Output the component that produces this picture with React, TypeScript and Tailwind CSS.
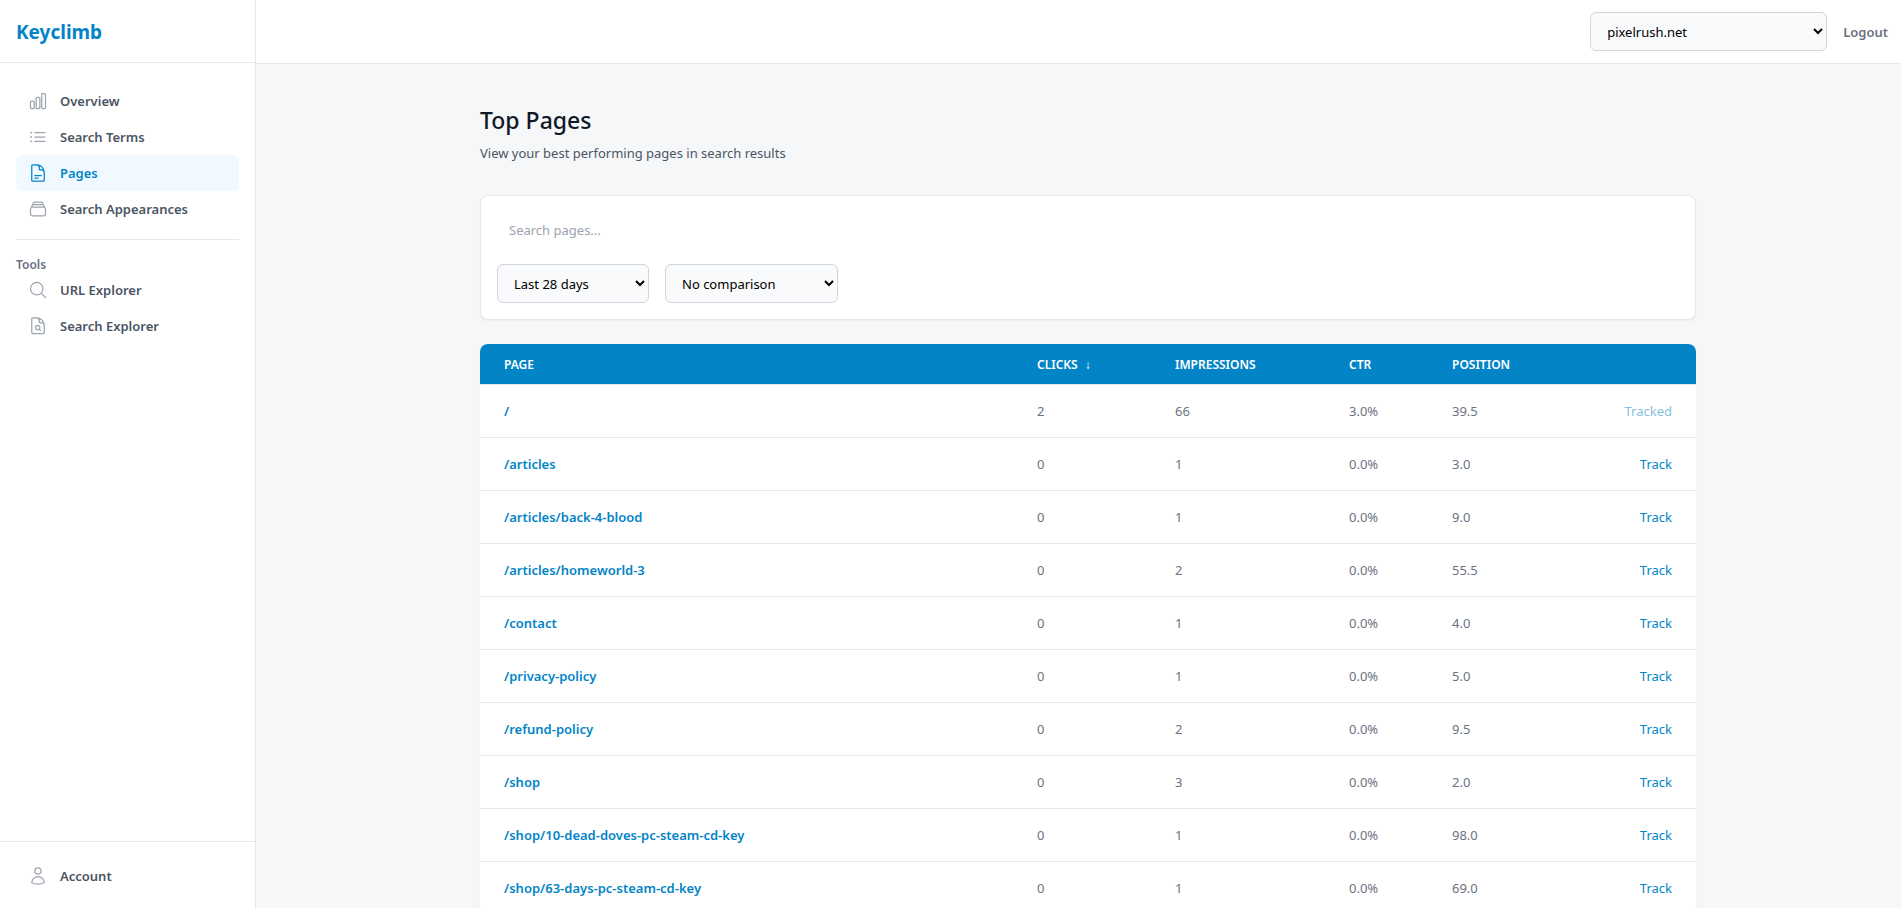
import type { ComponentType } from "react";
import clsx from "clsx";
import {
  HiOutlineChartBar,
  HiOutlineDocumentMagnifyingGlass,
  HiOutlineDocumentText,
  HiOutlineListBullet,
  HiOutlineMagnifyingGlass,
  HiOutlineRectangleStack,
  HiOutlineUser,
} from "react-icons/hi2";

type NavItemProps = {
  label: string;
  icon: ComponentType<{ className?: string }>;
  active?: boolean;
};

const mainNav: NavItemProps[] = [
  { label: "Overview", icon: HiOutlineChartBar },
  { label: "Search Terms", icon: HiOutlineListBullet },
  { label: "Pages", icon: HiOutlineDocumentText, active: true },
  { label: "Search Appearances", icon: HiOutlineRectangleStack },
];

const toolsNav: NavItemProps[] = [
  { label: "URL Explorer", icon: HiOutlineMagnifyingGlass },
  { label: "Search Explorer", icon: HiOutlineDocumentMagnifyingGlass },
];

const rows = [
  { page: "/", clicks: 2, impressions: 66, ctr: "3.0%", position: "39.5", tracked: true },
  { page: "/articles", clicks: 0, impressions: 1, ctr: "0.0%", position: "3.0" },
  { page: "/articles/back-4-blood", clicks: 0, impressions: 1, ctr: "0.0%", position: "9.0" },
  { page: "/articles/homeworld-3", clicks: 0, impressions: 2, ctr: "0.0%", position: "55.5" },
  { page: "/contact", clicks: 0, impressions: 1, ctr: "0.0%", position: "4.0" },
  { page: "/privacy-policy", clicks: 0, impressions: 1, ctr: "0.0%", position: "5.0" },
  { page: "/refund-policy", clicks: 0, impressions: 2, ctr: "0.0%", position: "9.5" },
  { page: "/shop", clicks: 0, impressions: 3, ctr: "0.0%", position: "2.0" },
  { page: "/shop/10-dead-doves-pc-steam-cd-key", clicks: 0, impressions: 1, ctr: "0.0%", position: "98.0" },
  { page: "/shop/63-days-pc-steam-cd-key", clicks: 0, impressions: 1, ctr: "0.0%", position: "69.0" },
];

const selectClass = "h-[39px] rounded-md border border-[#d1d5db] bg-[#f9fafb] px-3 text-black";

function NavItem({ label, icon: Icon, active }: NavItemProps) {
  return (
    <a
      href="#"
      className={clsx(
        "flex h-9 items-center gap-3 rounded-md px-3 font-semibold",
        active ? "bg-[#f0f9ff] text-[#0284c7]" : "text-[#4b5563]",
      )}
    >
      <Icon className={clsx("size-5", active ? "text-[#0284c7]" : "text-[#9ca3af]")} />
      {label}
    </a>
  );
}

function Sidebar() {
  return (
    <aside className="sticky top-0 flex h-screen w-64 shrink-0 flex-col border-r border-[#e5e7eb] bg-white">
      <div className="flex h-[63px] items-center border-b border-[#e5e7eb] px-4 pt-0.5">
        <a href="#" className="text-[19px] font-bold text-[#0284c7]">
          Keyclimb
        </a>
      </div>

      <nav className="flex-1 px-4 pt-5">
        {mainNav.map((item) => (
          <NavItem key={item.label} {...item} />
        ))}
        <hr className="mt-3 border-[#e5e7eb]" />
        <h2 className="mt-[18px] text-xs leading-[14px] font-semibold text-[#6b7280]">Tools</h2>
        {toolsNav.map((item) => (
          <NavItem key={item.label} {...item} />
        ))}
      </nav>

      <div className="border-t border-[#e5e7eb] px-4 pt-4 pb-3.5">
        <NavItem label="Account" icon={HiOutlineUser} />
      </div>
    </aside>
  );
}

function Filters() {
  return (
    <form className="mt-8 rounded-lg border border-[#e5e7eb] bg-white p-4 shadow-xs">
      <input
        type="search"
        aria-label="Search pages"
        placeholder="Search pages..."
        className="block h-9 w-full px-3 placeholder:text-[#9ca3af]"
      />
      <div className="mt-4 flex gap-4">
        <select aria-label="Date range" className={clsx(selectClass, "w-[152px]")}>
          <option>Last 28 days</option>
        </select>
        <select aria-label="Comparison" className={clsx(selectClass, "w-[173px]")}>
          <option>No comparison</option>
        </select>
      </div>
    </form>
  );
}

function PagesTable() {
  return (
    <div className="mt-6 overflow-hidden rounded-lg bg-white shadow-xs">
      <table className="w-full table-fixed text-left">
        <thead className="bg-[#0284c7] text-xs text-white uppercase">
          <tr className="h-10">
            <th className="px-6 pt-0.5 font-semibold">Page</th>
            <th className="w-[138px] px-6 pt-0.5 font-semibold whitespace-nowrap">
              Clicks <span className="ml-1">↓</span>
            </th>
            <th className="w-[174px] px-6 pt-0.5 font-semibold">Impressions</th>
            <th className="w-[103px] px-6 pt-0.5 font-semibold">CTR</th>
            <th className="w-[268px] px-6 pt-0.5 font-semibold" colSpan={2}>
              Position
            </th>
          </tr>
        </thead>
        <tbody className="text-[#6b7280]">
          {rows.map((row) => (
            <tr key={row.page} className="h-[53px] border-t border-[#e5e7eb]">
              <td className="px-6">
                <a href="#" className="font-semibold text-[#0284c7]">
                  {row.page}
                </a>
              </td>
              <td className="px-6">{row.clicks}</td>
              <td className="px-6">{row.impressions}</td>
              <td className="px-6">{row.ctr}</td>
              <td className="px-6">{row.position}</td>
              <td className="px-6 text-right">
                <button type="button" disabled={row.tracked} className="text-[#0284c7] disabled:opacity-50">
                  {row.tracked ? "Tracked" : "Track"}
                </button>
              </td>
            </tr>
          ))}
        </tbody>
      </table>
    </div>
  );
}

export default function App() {
  return (
    <div className="flex min-h-screen bg-[#f5f7f9] font-['Noto_Sans',sans-serif] text-[13px] leading-5">
      <Sidebar />

      <div className="min-w-0 flex-1">
        <header className="flex h-16 items-center justify-end gap-4 border-b border-[#e5e7eb] bg-white pr-[13px]">
          <select aria-label="Site" className={clsx(selectClass, "w-[237px]")}>
            <option>pixelrush.net</option>
          </select>
          <button type="button" className="font-semibold text-[#6b7280]">
            Logout
          </button>
        </header>

        <main className="pl-[19px]">
          <div className="mx-auto max-w-7xl px-8 py-10">
            <h1 className="text-[23px] leading-8 font-medium text-[#111827]">Top Pages</h1>
            <p className="mt-[7px] text-[#4b5563]">View your best performing pages in search results</p>
            <Filters />
            <PagesTable />
          </div>
        </main>
      </div>
    </div>
  );
}
